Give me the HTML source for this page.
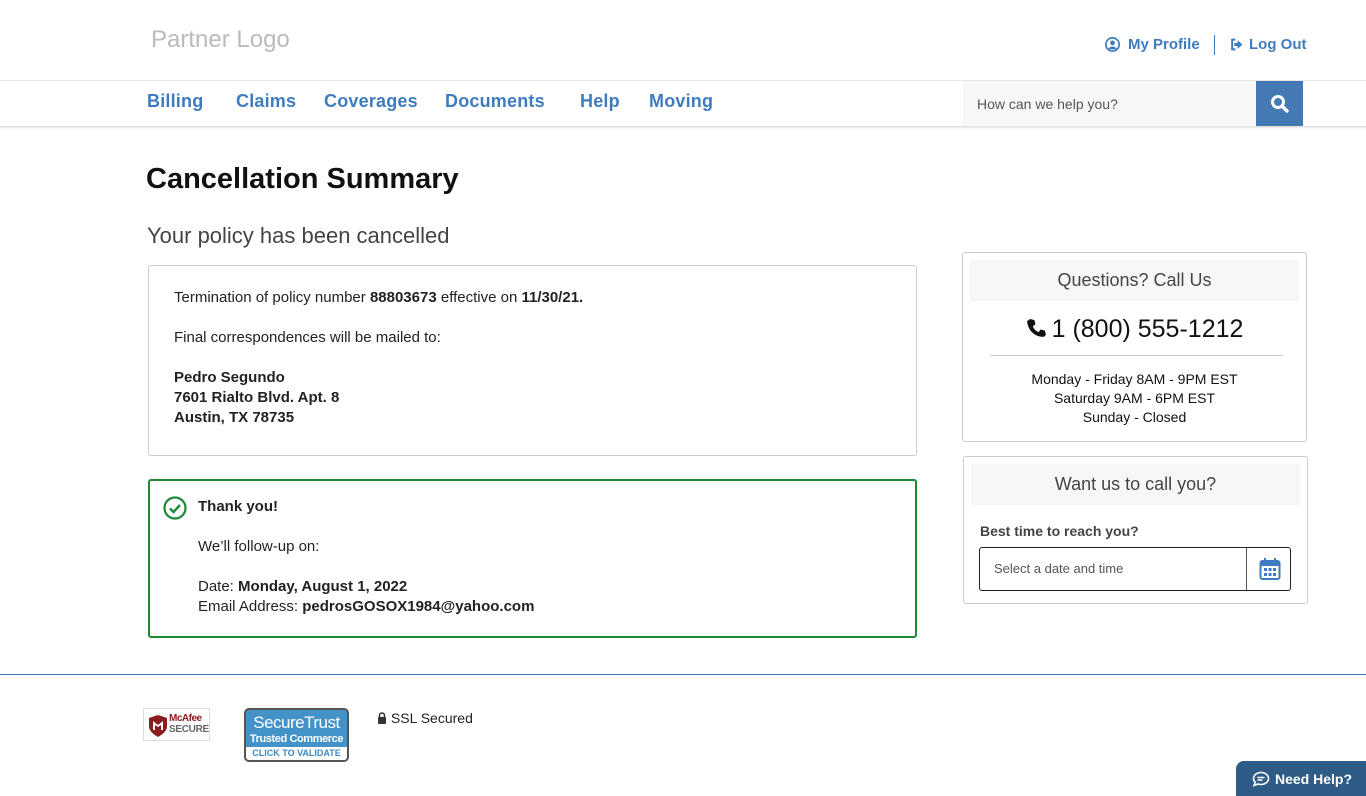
<!DOCTYPE html>
<html><head><meta charset="utf-8"><style>
*{margin:0;padding:0;box-sizing:border-box}
body{width:1366px;height:796px;position:relative;overflow:hidden;background:#fff;font-family:"Liberation Sans",sans-serif;color:#222}
.a{position:absolute}
.blue{color:#3f7cbf}
.nav a{position:absolute;top:91px;font-size:18px;font-weight:bold;color:#3f7cbf;text-decoration:none;letter-spacing:.2px}
.card{position:absolute;border:1px solid #ccc;border-radius:3px}
p{font-size:15px;line-height:20px}
.hd{position:absolute;background:#f7f7f7;text-align:center;font-size:18px;color:#444;border-radius:2px}
</style></head><body>
<div class="a" style="left:151px;top:26px;font-size:24px;color:#bbb">Partner Logo</div>
<div class="a blue" style="left:1105px;top:36px;font-size:15px;font-weight:bold;display:flex;align-items:center;gap:8px">
<svg width="15" height="15" viewBox="0 0 14 14"><circle cx="7" cy="7" r="6.2" fill="none" stroke="#3f7cbf" stroke-width="1.6"/><circle cx="7" cy="5.5" r="2.2" fill="#3f7cbf"/><path d="M3 11.5c1-2 2.3-2.6 4-2.6s3 .6 4 2.6" fill="#3f7cbf"/></svg>My Profile</div>
<div class="a" style="left:1214px;top:35px;width:1px;height:20px;background:#3f7cbf"></div>
<div class="a blue" style="left:1230px;top:36px;font-size:15px;font-weight:bold;display:flex;align-items:center;gap:6px">
<svg width="13" height="13" viewBox="0 0 12 12"><path d="M5 1.5H2v9h3" fill="none" stroke="#3f7cbf" stroke-width="1.8"/><path d="M4 4.5h3V2l4.5 4L7 10V7.5H4z" fill="#3f7cbf"/></svg>Log Out</div>
<div class="a" style="left:0;top:80px;width:1366px;height:1px;background:#e6e6e6"></div>
<div class="a" style="left:0;top:126px;width:1366px;height:3px;background:linear-gradient(#d8d8d8,#fff)"></div>
<div class="nav"><a style="left:147px">Billing</a><a style="left:236px">Claims</a><a style="left:324px">Coverages</a><a style="left:445px">Documents</a><a style="left:580px">Help</a><a style="left:649px">Moving</a></div>
<div class="a" style="left:963px;top:81px;width:293px;height:45px;background:#f7f7f7;font-size:14px;color:#555;padding:15px 0 0 14px">How can we help you?</div>
<div class="a" style="left:1256px;top:81px;width:47px;height:45px;background:#4479b3">
<svg class="a" style="left:14px;top:13px" width="20" height="20" viewBox="0 0 20 20"><circle cx="8" cy="8" r="5.5" fill="none" stroke="#fff" stroke-width="3"/><path d="M12 12l5 5" stroke="#fff" stroke-width="3.4" stroke-linecap="round"/></svg></div>

<div class="a" style="left:146px;top:163px;font-size:29px;font-weight:bold;color:#111">Cancellation Summary</div>
<div class="a" style="left:147px;top:223px;font-size:22px;color:#444">Your policy has been cancelled</div>

<div class="card" style="left:148px;top:265px;width:769px;height:191px;padding:22px 25px">
<p>Termination of policy number <b>88803673</b> effective on <b>11/30/21.</b></p>
<p style="margin-top:20px">Final correspondences will be mailed to:</p>
<p style="margin-top:20px;font-weight:bold">Pedro Segundo<br>7601 Rialto Blvd. Apt. 8<br>Austin, TX 78735</p>
</div>
<div class="card" style="left:148px;top:479px;width:769px;height:159px;border:2px solid #1a8a36;padding:16px 0 0 48px">
<svg class="a" style="left:13px;top:15px" width="24" height="24" viewBox="0 0 24 24"><circle cx="12" cy="12" r="10.5" fill="none" stroke="#1a8a36" stroke-width="2.2"/><path d="M7 12.5l3.5 3.5 6.5-7" fill="none" stroke="#1a8a36" stroke-width="2.4"/></svg>
<p style="font-weight:bold">Thank you!</p>
<p style="margin-top:20px">We’ll follow-up on:</p>
<p style="margin-top:20px">Date: <b>Monday, August 1, 2022</b><br>Email Address: <b>pedrosGOSOX1984@yahoo.com</b></p>
</div>

<div class="card" style="left:962px;top:252px;width:345px;height:190px"></div>
<div class="hd" style="left:970px;top:260px;width:329px;height:41px;line-height:41px">Questions? Call Us</div>
<div class="a" style="left:962px;top:315px;width:345px;text-align:center;font-size:25px;color:#111">
<svg width="21" height="21" viewBox="0 0 20 20" style="vertical-align:-2px;margin-right:5px"><path d="M4 1l4 1 1 4-2.5 2c1 2.5 3 4.5 5.5 5.5l2-2.5 4 1 1 4-2 2C8 18 2 12 1 3z" fill="#111"/></svg>1 (800) 555-1212</div>
<div class="a" style="left:990px;top:355px;width:293px;height:1px;background:#ccc"></div>
<div class="a" style="left:962px;top:370px;width:345px;text-align:center;font-size:14px;line-height:19px;color:#111">Monday - Friday 8AM - 9PM EST<br>Saturday 9AM - 6PM EST<br>Sunday - Closed</div>

<div class="card" style="left:963px;top:456px;width:345px;height:148px"></div>
<div class="hd" style="left:971px;top:464px;width:329px;height:41px;line-height:41px">Want us to call you?</div>
<div class="a" style="left:980px;top:523px;font-size:14px;font-weight:bold;color:#444">Best time to reach you?</div>
<div class="a" style="left:979px;top:547px;width:312px;height:44px;border:1px solid #222;border-radius:3px;font-size:13px;color:#555;padding:13px 0 0 14px">Select a date and time
<div class="a" style="left:266px;top:0;width:1px;height:42px;background:#555"></div>
<svg class="a" style="left:279px;top:9px" width="22" height="24" viewBox="0 0 22 24"><rect x="1.5" y="4" width="19" height="18" rx="2" fill="none" stroke="#3f7cbf" stroke-width="2"/><rect x="1.5" y="4" width="19" height="5" fill="#3f7cbf"/><rect x="5" y="1" width="2" height="5" fill="#3f7cbf"/><rect x="15" y="1" width="2" height="5" fill="#3f7cbf"/><g fill="#3f7cbf"><rect x="5" y="11" width="3" height="3"/><rect x="9.5" y="11" width="3" height="3"/><rect x="14" y="11" width="3" height="3"/><rect x="5" y="16" width="3" height="3"/><rect x="9.5" y="16" width="3" height="3"/><rect x="14" y="16" width="3" height="3"/></g></svg>
</div>

<div class="a" style="left:0;top:674px;width:1366px;height:1px;background:#3f7cbf"></div>
<div class="a" style="left:143px;top:708px;width:67px;height:33px;border:1px solid #ddd;background:#fff">
<svg class="a" style="left:4px;top:6px" width="20" height="22" viewBox="0 0 20 22"><path d="M1 3l9-3 9 3v8c0 5-4 8-9 11C5 19 1 16 1 11z" fill="#8b1c1c"/><path d="M5 6l5 4 5-4v9h-2v-5l-3 2-3-2v5H5z" fill="#fff"/></svg>
<div class="a" style="left:25px;top:4px;font-size:10px;font-weight:bold;color:#8b1c1c;letter-spacing:-.5px">McAfee</div>
<div class="a" style="left:25px;top:15px;font-size:10px;font-weight:bold;color:#666;letter-spacing:-.3px">SECURE</div></div>
<div class="a" style="left:244px;top:708px;width:105px;height:54px;border:2px solid #555;border-radius:5px;background:#4393c9;overflow:hidden;text-align:center;color:#fff">
<div style="font-size:17px;line-height:20px;margin-top:3px;letter-spacing:-.5px">SecureTrust</div>
<div style="font-size:11px;font-weight:bold;line-height:12px;letter-spacing:-.4px">Trusted Commerce</div>
<div style="background:#fff;color:#3b8ac2;font-size:9px;font-weight:bold;line-height:13px;margin-top:2px">CLICK TO VALIDATE</div></div>
<div class="a" style="left:377px;top:710px;font-size:14px;color:#222"><svg width="10" height="12" viewBox="0 0 10 12" style="vertical-align:-1px"><path d="M2.5 5V3.5a2.5 2.5 0 015 0V5" fill="none" stroke="#333" stroke-width="1.6"/><rect x="1" y="5" width="8" height="7" rx="1" fill="#333"/></svg> SSL Secured</div>

<div class="a" style="left:1236px;top:761px;width:130px;height:35px;background:#2f5b87;border-radius:8px 0 0 0;color:#fff;font-size:14px;font-weight:bold;padding:10px 0 0 16px">
<svg width="18" height="16" viewBox="0 0 18 16" style="vertical-align:-3px;margin-right:5px"><path d="M9 1.5c4.2 0 7.5 2.6 7.5 6s-3.3 6-7.5 6c-1 0-2-.2-2.9-.5L2 14.5l1.2-3.2C2 10.2 1.5 8.9 1.5 7.5c0-3.4 3.3-6 7.5-6z" fill="none" stroke="#fff" stroke-width="1.6"/><path d="M5.5 6.5h7M5.5 9h5" stroke="#fff" stroke-width="1.5"/></svg>Need Help?</div>
</body></html>
